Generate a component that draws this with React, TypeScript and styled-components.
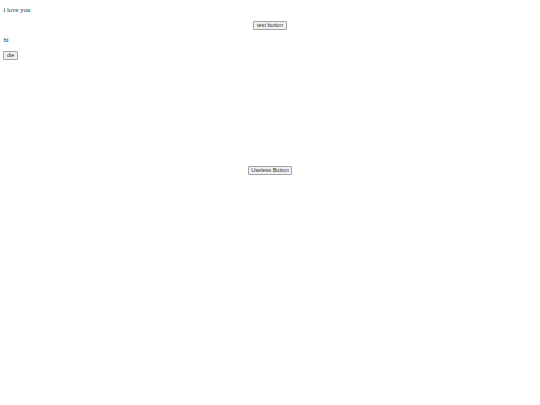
import { FC } from "react";
import styled, { createGlobalStyle } from "styled-components";

// sizes are the browser defaults shrunk to 540/1280 of their size
const GlobalStyle = createGlobalStyle`
  html, body {
    background: #ffffff;
  }

  body {
    margin: 0 3.4px;
    padding-top: 6px;
    font-family: "Liberation Serif", "Times New Roman", serif;
    font-size: 6.75px;
    line-height: 7.8px;
    color: #333333;
  }
`;

const Line = styled.p<{ $first?: boolean }>`
  margin: ${(props) => (props.$first ? 0 : 6.75)}px 0 6.75px;
`;

const Centered = styled.div<{ $top?: number }>`
  display: flex;
  justify-content: center;
  margin-top: ${(props) => props.$top ?? 0}px;
`;

const PlainButton = styled.button`
  box-sizing: border-box;
  height: 9px;
  padding: 0 2.5px;
  font-family: "Liberation Sans", Arial, sans-serif;
  font-size: 5.6px;
  line-height: 7px;
  color: #333333;
  background: #f0f0f0;
  border: 1px solid #a3a3a3;
  border-radius: 1px;
  vertical-align: top;
`;

const App: FC = () => {
  return (
    <>
      <GlobalStyle />
      <Line $first>i love you</Line>
      <Centered>
        <PlainButton>test button</PlainButton>
      </Centered>
      <Line>hi</Line>
      <PlainButton>die</PlainButton>
      <Centered $top={106}>
        <PlainButton>Useless Button</PlainButton>
      </Centered>
    </>
  );
};

export default App;
